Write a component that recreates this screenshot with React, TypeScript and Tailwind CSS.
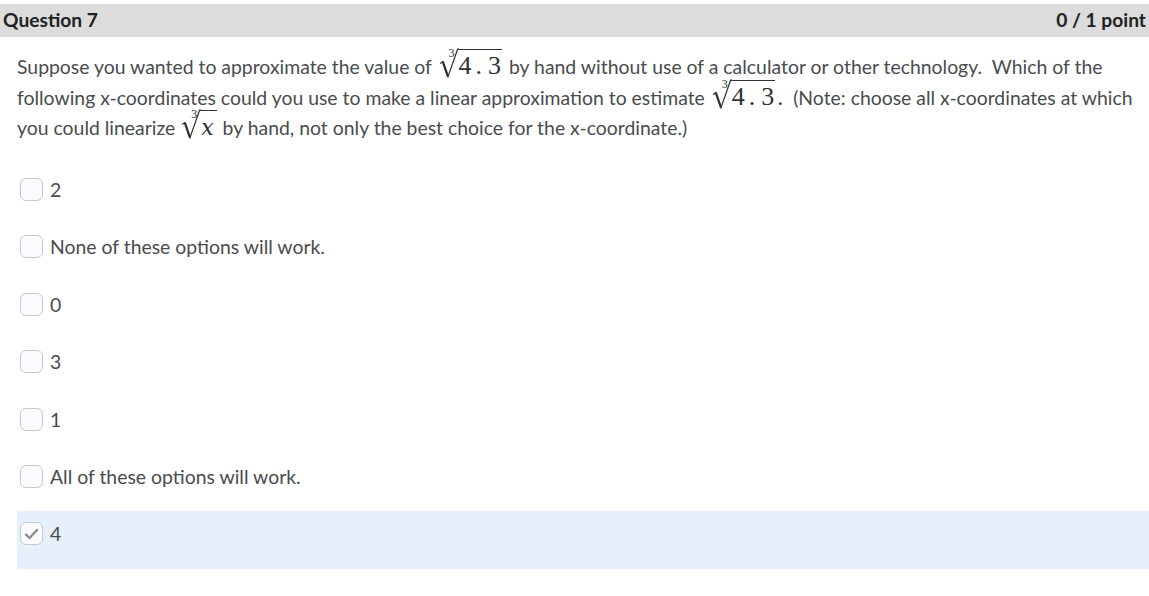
import React from 'react'

const ink = 'text-[#494c4e]'
const mathInk = 'text-[#2f3133]'

function CubeRoot({ children, tight = false }: { children: React.ReactNode; tight?: boolean }) {
  return (
    <span className={`relative inline-block pl-[20px] ${tight ? 'mx-[1px] pr-[3px]' : 'mx-[2px] pr-[1px]'}`}>
      {/* surd sign */}
      <svg width="20" height="30" viewBox="0 0 20 30" className="absolute left-0 top-[-4px]">
        <path d="M1 15.5 L3.8 13.6 L9 28.6 L18.6 1.2 L20 1.2" fill="none" stroke="#2f3133" strokeWidth="1.2" strokeLinejoin="miter" />
        <path d="M3.8 13.6 L9 28.6" fill="none" stroke="#2f3133" strokeWidth="2.2" />
      </svg>
      <span className={`absolute left-[10px] top-[-3px] text-[12px] leading-[8px] font-['Liberation_Serif',serif] ${mathInk}`}>3</span>
      {/* vinculum */}
      <span className="absolute left-[19px] right-0 top-[-3.5px] border-t-[1.4px] border-[#2f3133]" />
      <span className={`leading-[20px] ${mathInk}`}>{children}</span>
    </span>
  )
}

const FourPointThree = () => (
  <span className="text-[26px] font-['Liberation_Serif',serif]">
    4<span className="ml-[4px]">.</span>
    <span className="ml-[6px]">3</span>
  </span>
)

function Option({ label, checked = false }: { label: string; checked?: boolean }) {
  return (
    <div className={`h-[57.4px] flex items-start gap-[7px] pt-[11px] pl-[3px] ${checked ? 'bg-[#e6f0fa]' : ''}`}>
      <span className="w-[23px] h-[23px] rounded-[6px] border border-[#c4c9cf] bg-[#f9fbff] flex items-center justify-center">
        {checked && (
          <svg width="15" height="12" viewBox="0 0 15 12">
            <path d="M2 6.5 L5.5 10 L13 2" fill="none" stroke="#8a8d90" strokeWidth="2.4" strokeLinecap="round" strokeLinejoin="round" />
          </svg>
        )}
      </span>
      <span className="text-[19.4px] leading-[23px]">{label}</span>
    </div>
  )
}

export default function App() {
  const options = [
    { label: '2' },
    { label: 'None of these options will work.' },
    { label: '0' },
    { label: '3' },
    { label: '1' },
    { label: 'All of these options will work.' },
    { label: '4', checked: true },
  ]

  return (
    <div className={`w-[1149px] h-[596px] bg-white font-['Lato',sans-serif] ${ink}`}>
      <div className="pt-[4px]">
        <div className="h-[33px] bg-[#dcdcdc] flex items-center justify-between pl-[3px] pr-[3px] text-[19.2px] font-bold text-[#202122]">
          <span>Question 7</span>
          <span>0 / 1 point</span>
        </div>
      </div>

      <div className="pl-[17px] pt-[15px] text-[19.4px] leading-[30px] whitespace-nowrap">
        <div>
          Suppose you wanted to approximate the value of{' '}
          <CubeRoot>
            <FourPointThree />
          </CubeRoot>{' '}
          by hand without use of a calculator or other technology.&nbsp; Which of the
        </div>
        <div>
          following x-coordinates could you use to make a linear approximation to estimate{' '}
          <CubeRoot>
            <FourPointThree />
          </CubeRoot>
          <span className={`text-[24px] font-['Liberation_Serif',serif] ${mathInk}`}>.</span>
          &nbsp; (Note: choose all x-coordinates at which
        </div>
        <div>
          you could linearize{' '}
          <CubeRoot tight>
            <span className="text-[22px] italic font-['DejaVu_Serif',serif]">x</span>
          </CubeRoot>{' '}
          by hand, not only the best choice for the x-coordinate.)
        </div>
      </div>

      <div className="mt-[24px] pl-[17px]">
        {options.map((o, i) => (
          <Option key={i} label={o.label} checked={o.checked} />
        ))}
      </div>
    </div>
  )
}
